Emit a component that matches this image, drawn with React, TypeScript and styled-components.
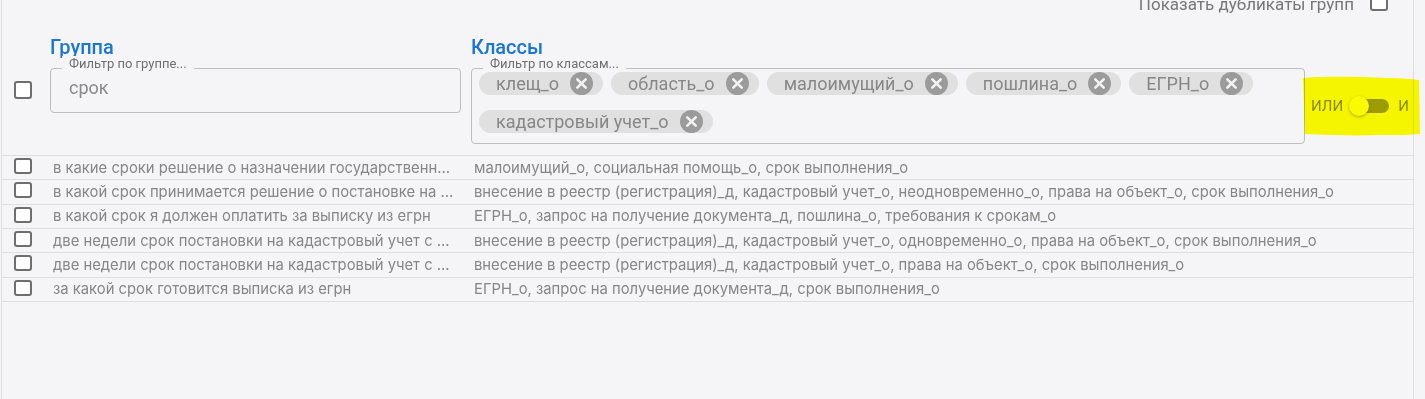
import styled, { createGlobalStyle } from "styled-components";

const GlobalStyle = createGlobalStyle`
  html, body {
    margin: 0;
    padding: 0;
    background: #f5f5f7;
  }
  body {
    font-family: Roboto, "Liberation Sans", sans-serif;
    overflow: hidden;
  }
`;

const chips = ["клещ_о", "область_о", "малоимущий_о", "пошлина_о", "ЕГРН_о", "кадастровый учет_о"];

const rows = [
  {
    group: "в какие сроки решение о назначении государственной социальной помощи",
    classes: "малоимущий_о, социальная помощь_о, срок выполнения_о",
  },
  {
    group: "в какой срок принимается решение о постановке на кадастровый учет",
    classes:
      "внесение в реестр (регистрация)_д, кадастровый учет_о, неодновременно_о, права на объект_о, срок выполнения_о",
  },
  {
    group: "в какой срок я должен оплатить за выписку из егрн",
    classes: "ЕГРН_о, запрос на получение документа_д, пошлина_о, требования к срокам_о",
  },
  {
    group: "две недели срок постановки на кадастровый учет с регистрацией права",
    classes:
      "внесение в реестр (регистрация)_д, кадастровый учет_о, одновременно_о, права на объект_о, срок выполнения_о",
  },
  {
    group: "две недели срок постановки на кадастровый учет с момента подачи",
    classes: "внесение в реестр (регистрация)_д, кадастровый учет_о, права на объект_о, срок выполнения_о",
  },
  {
    group: "за какой срок готовится выписка из егрн",
    classes: "ЕГРН_о, запрос на получение документа_д, срок выполнения_о",
  },
];

function ChipDelete() {
  return (
    <svg width="23" height="23" viewBox="0 0 23 23">
      <circle cx="11.5" cy="11.5" r="11.5" fill="#9b9b9b" />
      <path d="M7.3 7.3 L15.7 15.7 M15.7 7.3 L7.3 15.7" stroke="#f2f2f2" strokeWidth="2.6" strokeLinecap="round" />
    </svg>
  );
}

function Highlight() {
  return (
    <HighlightMark width="122" height="64" viewBox="0 0 122 64">
      <path
        d="M3 4 C30 2 60 3 88 4 C100 4 112 5 119 6 L120 60 C110 61 96 61 80 61 C55 62 30 61 5 60 C4 45 4 20 3 4 Z"
        fill="#ffff00"
      />
    </HighlightMark>
  );
}

export default function App() {
  return (
    <Page>
      <GlobalStyle />
      <Frame>
        <TopBar>
          <TopLabel>{"Показать дубликаты групп"}</TopLabel>
          <Check />
        </TopBar>
        <Header>
          <span />
          <ColumnTitle>{"Группа"}</ColumnTitle>
          <ColumnTitle>{"Классы"}</ColumnTitle>
          <span />
          <HeadCheckCell>
            <Check />
          </HeadCheckCell>
          <GroupField>
            <FieldLabel>{"Фильтр по группе..."}</FieldLabel>
            <FieldValue>{"срок"}</FieldValue>
          </GroupField>
          <ClassesField>
            <FieldLabel>{"Фильтр по классам..."}</FieldLabel>
            {chips.map((c) => (
              <Chip key={c}>
                <ChipText>{c}</ChipText>
                <ChipDelete />
              </Chip>
            ))}
          </ClassesField>
          <ModeSwitch>
            <ModeText>{"ИЛИ"}</ModeText>
            <Track>
              <Thumb />
            </Track>
            <ModeText>{"И"}</ModeText>
          </ModeSwitch>
        </Header>
        {rows.map((r, i) => (
          <Row key={i}>
            <RowCheckCell>
              <Check $h={16} />
            </RowCheckCell>
            <Cell>{r.group}</Cell>
            <Cell>{r.classes}</Cell>
          </Row>
        ))}
      </Frame>
      <Highlight />
    </Page>
  );
}

const Page = styled.div`
  position: relative;
  width: 1425px;
  height: 399px;
  overflow: hidden;
`;

const Frame = styled.div`
  display: flow-root;
  margin-left: 1px;
  width: 1413px;
  height: 420px;
  box-sizing: border-box;
  border-left: 1px solid #dedee0;
  border-right: 1px solid #dedee0;
`;

const TopBar = styled.div`
  display: flex;
  justify-content: flex-end;
  align-items: center;
  gap: 16px;
  height: 18px;
  margin-top: -7px;
  padding-right: 25px;
`;

const TopLabel = styled.span`
  font-size: 17px;
  line-height: 20px;
  color: #777;
  margin-top: 4px;
`;

const Check = styled.span<{ $h?: number }>`
  display: block;
  width: 18px;
  height: ${({ $h }) => $h ?? 18}px;
  box-sizing: border-box;
  border: 2px solid #6e6e6e;
  border-radius: 3px;
  background: #fff;
`;

const Header = styled.div`
  display: grid;
  grid-template-columns: 48px 421px 834px 1fr;
  grid-template-rows: 24px auto;
  row-gap: 9px;
  padding: 24px 0 11px;
  border-bottom: 1px solid #dedee0;
`;

const ColumnTitle = styled.div`
  font-size: 20px;
  font-weight: 500;
  line-height: 24px;
  color: #1976d2;
`;

const HeadCheckCell = styled.div`
  padding: 13px 0 0 12px;
`;

const GroupField = styled.div`
  position: relative;
  width: 411px;
  height: 45px;
  box-sizing: border-box;
  border: 1px solid #bdbdbd;
  border-radius: 4px;
  padding: 8px 18px 0;
  align-self: start;
`;

const FieldLabel = styled.span`
  position: absolute;
  top: -13px;
  left: 11px;
  padding: 0 7px;
  font-size: 13px;
  line-height: 15px;
  color: #6f6f6f;
  background: #f5f5f7;
  white-space: nowrap;
`;

const FieldValue = styled.div`
  font-size: 18px;
  line-height: 22px;
  color: #8a8a8a;
`;

const ClassesField = styled.div`
  position: relative;
  width: 834px;
  height: 76px;
  box-sizing: border-box;
  border: 1px solid #bdbdbd;
  border-radius: 4px;
  padding: 3px 7px 10px;
  display: flex;
  flex-wrap: wrap;
  align-content: flex-start;
  column-gap: 8px;
  row-gap: 15px;
`;

const Chip = styled.div`
  display: flex;
  align-items: center;
  gap: 11px;
  height: 23px;
  padding: 0 10px 0 17px;
  border-radius: 12px;
  background: #e0e0e0;
`;

const ChipText = styled.span`
  font-size: 18px;
  line-height: 20px;
  color: #878787;
  white-space: nowrap;
`;

const ModeSwitch = styled.div`
  display: flex;
  align-items: center;
  align-self: center;
  padding-left: 6px;
`;

const ModeText = styled.span`
  font-size: 15px;
  line-height: 20px;
  color: #8a8a8a;
`;

const Track = styled.div`
  position: relative;
  width: 39px;
  height: 14px;
  margin: 0 9px 0 7px;
  border-radius: 7px;
  background: #9c9c9c;
`;

const Thumb = styled.div`
  position: absolute;
  left: -1px;
  top: -3px;
  width: 20px;
  height: 20px;
  border-radius: 50%;
  background: #fafafa;
  box-shadow: 0 1px 3px rgba(0, 0, 0, 0.3);
`;

const Row = styled.div`
  display: grid;
  grid-template-columns: 41px 421px 1fr;
  align-items: center;
  height: 24.33px;
  box-sizing: border-box;
  border-bottom: 1px solid #dedee0;
`;

const RowCheckCell = styled.div`
  align-self: start;
  padding: 2px 0 0 12px;
`;

const Cell = styled.div`
  padding: 0 10px;
  font-family: Inter, Roboto, sans-serif;
  font-size: 14.8px;
  line-height: 18px;
  color: #868686;
  white-space: nowrap;
  overflow: hidden;
  text-overflow: ellipsis;
`;

const HighlightMark = styled.svg`
  position: absolute;
  left: 1300px;
  top: 74px;
  mix-blend-mode: multiply;
  pointer-events: none;
`;
